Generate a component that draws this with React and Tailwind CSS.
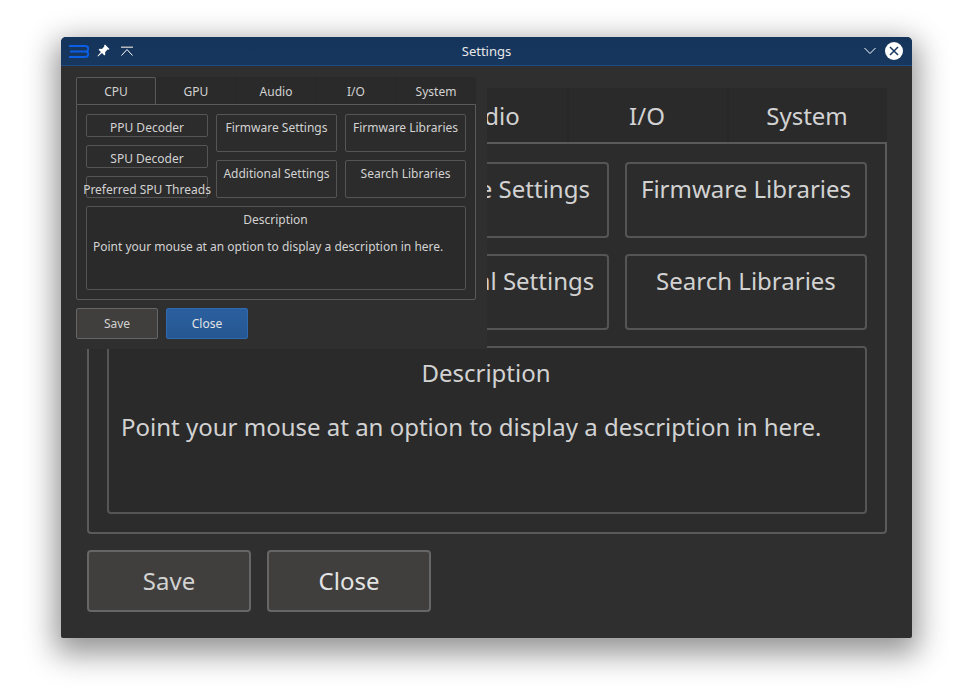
import React from 'react';

const tabs = ['CPU', 'GPU', 'Audio', 'I/O', 'System'];

const big = {
  tabRow: 'h-[54px]',
  tab: 'w-[160px] text-[24px] bg-[#2a2a2a] border-l-2 border-l-[#272727] pr-[2px] pt-[2px]',
  tabActive: 'w-[160px] text-[24px] bg-[#2c2c2c] border-2 border-b-0 border-[#5a5a5a] rounded-t-[4px] pt-[2px]',
  panel: 'h-[392px] w-[800px] border-2 border-[#5a5a5a] rounded-b-[4px] bg-[#2c2c2c] px-[18px] pt-[18px]',
  grid: 'gap-x-[16px]',
  leftCol: 'w-[244px] gap-y-[16px]',
  col: 'w-[242px] gap-y-[16px]',
  smallBtn: 'h-[46px] last:h-[44px] text-[24px] border-2 rounded-[4px] pt-[4px]',
  tallBtn: 'h-[76px] text-[24px] border-2 rounded-[4px] pt-[7px]',
  desc: 'mt-[16px] h-[168px] border-2 rounded-[4px] text-[24px] bg-[#2a2a2a]',
  descTitle: 'pt-[7px] pr-[2px] leading-[36px]',
  descBody: 'mt-[18px] ml-[12px] leading-[36px]',
  footer: 'mt-[16px] gap-x-[16px]',
  btn: 'w-[164px] h-[62px] text-[24px] border-2 rounded-[4px]',
  close: 'bg-[#403f3d] border-[#666666]',
};

const small = {
  tabRow: 'h-[27px]',
  tab: 'w-[80px] text-[12px] bg-[#2a2a2a] border-l border-l-[#272727] pr-[1px] pt-[2px]',
  tabActive: 'w-[80px] text-[12px] bg-[#2c2c2c] border border-b-0 border-[#5a5a5a] rounded-t-[2px] pt-[2px]',
  panel: 'h-[196px] w-[400px] border border-[#5a5a5a] rounded-b-[2px] bg-[#2c2c2c] px-[9px] pt-[9px]',
  grid: 'gap-x-[8px]',
  leftCol: 'w-[122px] gap-y-[8px]',
  col: 'w-[121px] gap-y-[8px]',
  smallBtn: 'h-[23px] last:h-[22px] text-[12px] border rounded-[2px] pt-[4px] last:pt-[6px]',
  tallBtn: 'h-[38px] text-[12px] border rounded-[2px] pt-[4px]',
  desc: 'mt-[8px] h-[84px] border rounded-[2px] text-[12px] bg-[#2a2a2a]',
  descTitle: 'pt-[4px] pr-[1px] leading-[18px]',
  descBody: 'mt-[9px] ml-[6px] leading-[18px]',
  footer: 'mt-[8px] gap-x-[8px]',
  btn: 'w-[82px] h-[31px] text-[12px] border rounded-[2px]',
  close: 'bg-gradient-to-b from-[#2a5f9f] to-[#265792] border-[#2f6ab0]',
};

function SettingsForm({ s }) {
  return (
    <div className="text-[#d2d2d2]">
      <div className={`flex items-stretch ${s.tabRow}`}>
        {tabs.map((t, i) => (
          <div key={t} className={`flex items-center justify-center ${i === 0 ? s.tabActive : s.tab}`}>{t}</div>
        ))}
      </div>
      <div className={s.panel}>
        <div className={`flex ${s.grid}`}>
          <div className={`flex flex-col ${s.leftCol}`}>
            {['PPU Decoder', 'SPU Decoder', 'Preferred SPU Threads'].map(t => (
              <div key={t} className={`flex items-center justify-center whitespace-nowrap border-[#555555] ${s.smallBtn}`}>{t}</div>
            ))}
          </div>
          <div className={`flex flex-col ${s.col}`}>
            {['Firmware Settings', 'Additional Settings'].map(t => (
              <div key={t} className={`text-center whitespace-nowrap border-[#555555] ${s.tallBtn}`}>{t}</div>
            ))}
          </div>
          <div className={`flex flex-col ${s.col}`}>
            {['Firmware Libraries', 'Search Libraries'].map(t => (
              <div key={t} className={`text-center whitespace-nowrap border-[#555555] ${s.tallBtn}`}>{t}</div>
            ))}
          </div>
        </div>
        <div className={`border-[#555555] ${s.desc}`}>
          <div className={`text-center ${s.descTitle}`}>Description</div>
          <div className={s.descBody}>Point your mouse at an option to display a description in here.</div>
        </div>
      </div>
      <div className={`flex ${s.footer}`}>
        <div className={`flex items-center justify-center bg-[#403f3d] border-[#666666] ${s.btn}`}>Save</div>
        <div className={`flex items-center justify-center text-[#e4e4e4] ${s.close} ${s.btn}`}>Close</div>
      </div>
    </div>
  );
}

export default function App() {
  return (
    <div className="h-[699px] w-[973px] bg-white pt-[37px] pl-[61px] overflow-hidden" style={{ fontFamily: '"Noto Sans", sans-serif' }}>
      <div className="relative w-[851px] h-[601px] bg-[#2f2f2f] rounded-t-[5px] rounded-b-[2px] shadow-[0_10px_30px_6px_rgba(0,0,0,0.42)]">
        {/* title bar */}
        <div className="relative flex items-center h-[29px] pl-[8px] pr-[8px] rounded-t-[5px] bg-gradient-to-b from-[#15345b] to-[#17375f] border-b border-b-[#1d4a80]">
          <svg width="20" height="13" viewBox="0 0 20 13" fill="none" stroke="#0b5fe6" strokeWidth="2">
            <path d="M0 1h16a3 2.500 0 0 1 0 5.500H1M16 6.500a3 2.500 0 0 1 0 5.500H0" />
          </svg>
          <svg className="ml-[8px] -translate-y-[1px]" width="13" height="13" viewBox="0 0 13 13" fill="#ffffff">
            <path d="M8 0.500l4.500 4.500-1 .8-1-.2-2.400 2.600.2 2.300-1 1-2.300-2.400L1 12.500 0.500 12l3.400-3.900L1.600 5.800l1-1 2.300.2L7.300 2.500 7.100 1.400z" />
          </svg>
          <svg className="ml-[11px]" width="12" height="11" viewBox="0 0 12 11" fill="none" stroke="#ffffff" strokeWidth="1">
            <path d="M0 1.250h12" stroke="#b5b8bd" strokeWidth="1.500" />
            <path d="M0.500 9.500l5.500-6 5.500 6" />
          </svg>
          <span className="absolute left-0 right-0 text-center text-[13px] pt-[2px] text-[#e8e8e8]">Settings</span>
          <div className="ml-auto flex items-center gap-x-[9px] z-10">
            <svg width="12" height="8" viewBox="0 0 12 8" fill="none" stroke="#ffffff" strokeWidth="1">
              <path d="M0.500 1l5.500 5.500L11.500 1" />
            </svg>
            <div className="flex items-center justify-center w-[18px] h-[18px] rounded-full bg-white mr-[1px]">
              <svg width="10" height="10" viewBox="0 0 10 10" fill="none" stroke="#163660" strokeWidth="1.500">
                <path d="M1 1l8 8M9 1l-8 8" />
              </svg>
            </div>
          </div>
        </div>
        {/* body */}
        <div className="pl-[26px] pt-[22px]">
          <SettingsForm s={big} />
        </div>
        {/* shrunk copy on top of the big form */}
        <div className="absolute left-0 top-[29px] w-[426px] h-[283px] bg-[#2f2f2f] pl-[15px] pt-[11px]">
          <SettingsForm s={small} />
        </div>
      </div>
    </div>
  );
}
